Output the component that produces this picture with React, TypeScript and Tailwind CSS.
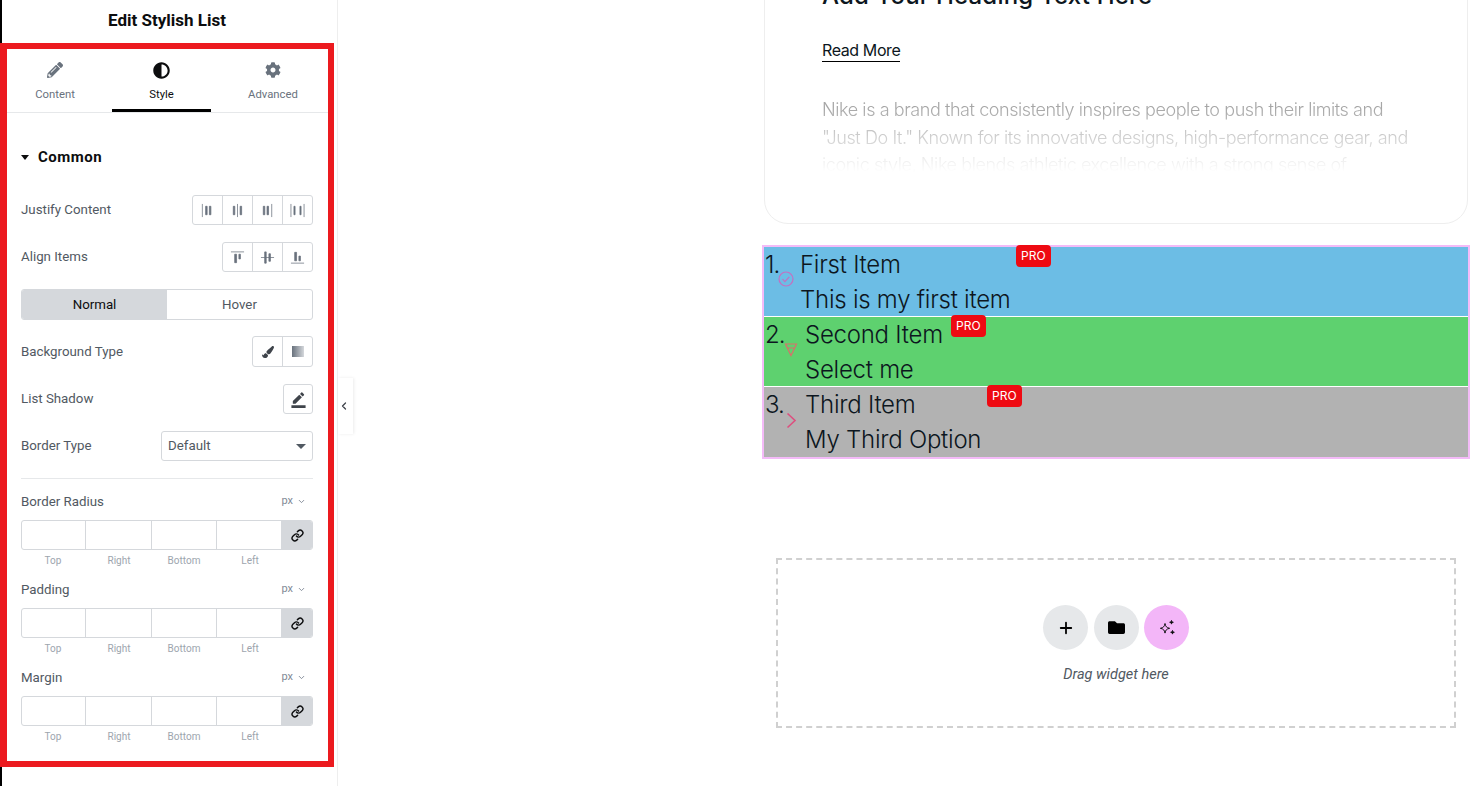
import { ChevronDown, ChevronLeft, Link, Plus } from "lucide-react";
import { FaAdjust, FaCog, FaFolder, FaPaintBrush, FaPencilAlt } from "react-icons/fa";
import { MdBorderColor } from "react-icons/md";

const justifyIcons = [
  <g key="a"><path d="M2.5 2v14" /><path d="M6 4.5h1.6v9H6zM10 4.5h1.6v9H10z" /></g>,
  <g key="b"><path d="M3.5 4.5h1.6v9H3.5z" /><path d="M8 2v14" /><path d="M10.8 4.5h1.6v9h-1.6z" /></g>,
  <g key="c"><path d="M3.5 4.5h1.6v9H3.5zM7.5 4.5h1.6v9H7.5z" /><path d="M12.5 2v14" /></g>,
  <g key="d"><path d="M1 2v14M15 2v14" /><path d="M4.2 4.5h1.2v9H4.2zM10.6 4.5h1.2v9h-1.2z" /></g>,
];

const alignIcons = [
  <g key="a"><path d="M1 3h14" /><path d="M5 5.5h2v9H5zM9.5 5.5h1.6v5H9.5z" /></g>,
  <g key="b"><path d="M1 9h14" /><path d="M5 3h1.6v12H5zM9.5 5h1.6v8H9.5z" /></g>,
  <g key="c"><path d="M1 15h14" /><path d="M5 3.5h2v9H5zM9.5 7.5h1.6v5H9.5z" /></g>,
];

function GlyphGroup({ icons, width }: { icons: React.ReactNode[]; width: string }) {
  return (
    <div className={`flex h-[30px] ${width} rounded-[3px] border border-[#d5d8dc] divide-x divide-[#d5d8dc]`}>
      {icons.map((icon, i) => (
        <div key={i} className="flex flex-1 items-center justify-center">
          <svg width="15" height="17" viewBox="0 0 16 18" fill="#69727d" stroke="#69727d" strokeWidth="0.8">
            {icon}
          </svg>
        </div>
      ))}
    </div>
  );
}

function Row({ label, children, className }: { label: string; children: React.ReactNode; className: string }) {
  return (
    <div className={`flex items-center justify-between ${className}`}>
      <span className="text-[13.3px] text-[#515962]">{label}</span>
      {children}
    </div>
  );
}

function Dimensions({ label, className }: { label: string; className: string }) {
  return (
    <div className={className}>
      <div className="flex h-[18px] items-center justify-between pt-[1px] pr-[7px]">
        <span className="text-[13.3px] text-[#515962]">{label}</span>
        <span className="flex items-center gap-1 text-[11px] text-[#818a96]">
          px <ChevronDown size={9} strokeWidth={2.5} />
        </span>
      </div>
      <div className="mt-[10px] flex h-[30px] overflow-hidden rounded-[3px] border border-[#d5d8dc]">
        <div className="w-[64px] border-r border-[#d5d8dc]" />
        <div className="w-[66px] border-r border-[#d5d8dc]" />
        <div className="w-[65px] border-r border-[#d5d8dc]" />
        <div className="flex-1" />
        <div className="flex w-[31px] items-center justify-center bg-[#d5d8dc] pl-px">
          <Link size={13} strokeWidth={2.6} className="text-[#0c0d0e]" />
        </div>
      </div>
      <div className="mt-[4px] flex text-center text-[10px] leading-[14px] text-[#9da5ae]">
        <span className="w-[64px]">Top</span>
        <span className="w-[68px]">Right</span>
        <span className="w-[62px]">Bottom</span>
        <span className="w-[70px]">Left</span>
      </div>
    </div>
  );
}

function Sidebar() {
  return (
    <aside className="h-[786px] w-[338px] shrink-0 border-r border-[#eeeeee] bg-white font-['Roboto',sans-serif]">
      <div className="h-[43px] border-l-2 border-black">
        <h1 className="w-[330px] pt-[9px] text-center text-[17px] leading-[22px] font-bold text-[#0c0d0e]">Edit Stylish List</h1>
      </div>
      <div className="h-[724px] w-[334px] border-[6px] border-l-[7px] border-[#ec1a1f]">
        <div className="flex h-[64px] border-b border-[#e6e8ea] text-[11.3px] text-[#69727d]">
          <div className="flex w-[105px] flex-col items-center pt-[13px] pr-[9px]">
            <FaPencilAlt size={16} />
            <span className="mt-[10px] leading-[14px]">Content</span>
          </div>
          <div className="flex h-[63px] w-[99px] flex-col items-center border-b-[3px] border-black pt-[13px] text-[#0c0d0e]">
            <FaAdjust size={17} />
            <span className="mt-[9px] leading-[14px]">Style</span>
          </div>
          <div className="flex flex-1 flex-col items-center pt-[13px] pl-[7px]">
            <FaCog size={16} />
            <span className="mt-[10px] leading-[14px]">Advanced</span>
          </div>
        </div>

        <div className="pr-[15px] pl-[14px]">
          <div className="mt-[35px] flex h-[18px] items-center gap-[9px] text-[15px] font-bold tracking-[0.5px] text-[#0c0d0e]">
            <span className="h-0 w-0 border-x-[4.5px] border-t-[5px] border-x-transparent border-t-[#0c0d0e]" />
            Common
          </div>

          <Row label="Justify Content" className="mt-[29px]">
            <GlyphGroup icons={justifyIcons} width="w-[121px]" />
          </Row>
          <Row label="Align Items" className="mt-[17px]">
            <GlyphGroup icons={alignIcons} width="w-[91px]" />
          </Row>

          <div className="mt-[17px] flex h-[31px] overflow-hidden rounded-[3px] border border-[#d5d8dc] text-[13.3px]">
            <div className="flex w-[145px] items-center justify-center bg-[#d5d8dc] text-[#0c0d0e]">Normal</div>
            <div className="flex flex-1 items-center justify-center text-[#515962]">Hover</div>
          </div>

          <Row label="Background Type" className="mt-[16px]">
            <div className="flex h-[31px] divide-x divide-[#d5d8dc] rounded-[3px] border border-[#d5d8dc]">
              <div className="flex w-[30px] items-center justify-center">
                <FaPaintBrush size={12} className="text-[#3f444b]" />
              </div>
              <div className="flex w-[29px] items-center justify-center">
                <div className="h-[11px] w-[12px] bg-gradient-to-r from-[#69727d] to-[#d5d8dc]" />
              </div>
            </div>
          </Row>

          <Row label="List Shadow" className="mt-[17px]">
            <div className="flex h-[30px] w-[30px] items-center justify-center rounded-[3px] border border-[#d5d8dc]">
              <MdBorderColor size={17} className="text-[#3f444b]" />
            </div>
          </Row>

          <Row label="Border Type" className="mt-[17px]">
            <div className="flex h-[30px] w-[152px] items-center justify-between rounded-[3px] border border-[#d5d8dc] pr-[6px] pl-[6px] text-[13.3px] text-[#515962]">
              Default
              <span className="h-0 w-0 border-x-[5px] border-t-[5px] border-x-transparent border-t-[#515962]" />
            </div>
          </Row>

          <div className="mt-[17px] h-px bg-[#e6e8ea]" />

          <Dimensions label="Border Radius" className="mt-[13px]" />
          <Dimensions label="Padding" className="mt-[12px]" />
          <Dimensions label="Margin" className="mt-[12px]" />
        </div>
      </div>
      <div className="h-[19px] border-l-2 border-black" />
    </aside>
  );
}

const items = [
  { n: "1.", title: "First Item", sub: "This is my first item", row: "h-[69px] bg-[#6cbde5]", num: "w-[14px]", badge: "left-[252px]", icon: "check" },
  { n: "2.", title: "Second Item", sub: "Select me", row: "h-[70px] border-t border-white bg-[#5ed16f]", num: "w-[19px]", badge: "left-[187px]", icon: "funnel" },
  { n: "3.", title: "Third Item", sub: "My Third Option", row: "h-[71px] border-t border-white bg-[#b2b2b2]", num: "w-[19px]", badge: "left-[223px]", icon: "chevron" },
];

function ItemIcon({ kind }: { kind: string }) {
  if (kind === "check") {
    return (
      <svg width="16" height="16" viewBox="0 0 16 16" fill="none" stroke="#c56fc0" strokeWidth="1.2">
        <circle cx="8" cy="8" r="7" />
        <path d="M4.5 8.2l2.4 2.4 4.4-4.8" />
      </svg>
    );
  }
  if (kind === "funnel") {
    return (
      <svg width="16" height="16" viewBox="0 0 16 16" fill="none" stroke="#d9706b" strokeWidth="1.2">
        <path d="M2.5 3h11L8 14.5zM4.5 7h7" />
      </svg>
    );
  }
  return (
    <svg width="16" height="18" viewBox="0 0 16 18" fill="none" stroke="#dd4f7f" strokeWidth="1.6">
      <path d="M4.5 2.5L12 9.5l-7.5 7" />
    </svg>
  );
}

function StylishList() {
  return (
    <div className="mt-[21px] w-[708px] border-2 border-[#f4bbf8] text-[24px] leading-[35px] font-light tracking-[-0.25px] text-[#0c1620]">
      {items.map((item) => (
        <div key={item.n} className={`relative flex ${item.row}`}>
          <span className={`${item.num} shrink-0 pl-px tracking-[-1px]`}>{item.n}</span>
          <span className="mt-[24px] w-[16px] shrink-0">
            <ItemIcon kind={item.icon} />
          </span>
          <div className="ml-[6px]">
            <div>{item.title}</div>
            <div>{item.sub}</div>
          </div>
          <span
            className={`absolute ${item.badge} top-[-2px] rounded-[4px] bg-[#ee0a12] px-[5px] text-[12px] leading-[22px] font-normal tracking-normal text-white`}
          >
            PRO
          </span>
        </div>
      ))}
    </div>
  );
}

function DropZone() {
  return (
    <div className="mt-[99px] ml-[14px] flex h-[170px] w-[680px] flex-col items-center border-2 border-dashed border-[#d0d0d0] pt-[45px]">
      <div className="flex">
        <div className="flex h-[45px] w-[45px] items-center justify-center rounded-full bg-[#e6e8ea] text-black">
          <Plus size={18} strokeWidth={2.4} />
        </div>
        <div className="ml-[6px] flex h-[45px] w-[45px] items-center justify-center rounded-full bg-[#e6e8ea] text-black">
          <FaFolder size={17} />
        </div>
        <div className="ml-[5px] flex h-[45px] w-[45px] items-center justify-center rounded-full bg-[#f3b6f8] text-black">
          <svg width="18" height="18" viewBox="0 0 18 18" fill="none" stroke="#0c0d0e" strokeWidth="1">
            <path d="M7 4.5c.5 3 1.6 4.2 4.6 4.8-3 .6-4.1 1.8-4.6 4.8-.5-3-1.6-4.2-4.6-4.8 3-.6 4.1-1.8 4.6-4.8z" />
            <path fill="#0c0d0e" d="M13.5 1.5c.2 1.1.7 1.6 1.8 1.8-1.1.2-1.6.7-1.8 1.8-.2-1.1-.7-1.6-1.8-1.8 1.1-.2 1.6-.7 1.8-1.8zM14.5 11.5c.2 1.1.7 1.6 1.8 1.8-1.1.2-1.6.7-1.8 1.8-.2-1.1-.7-1.6-1.8-1.8 1.1-.2 1.6-.7 1.8-1.8z" />
          </svg>
        </div>
      </div>
      <p className="mt-[16px] font-['Roboto',sans-serif] text-[14.5px] leading-[18px] text-[#515962] italic">Drag widget here</p>
    </div>
  );
}

export default function App() {
  return (
    <div className="relative flex h-[786px] w-[1482px] overflow-hidden bg-white">
      <Sidebar />

      <div className="absolute top-[378px] left-[338px] flex h-[56px] w-[15px] items-center justify-center bg-white pr-[3px] shadow-[1px_0_3px_rgba(0,0,0,0.08)]">
        <ChevronLeft size={12} strokeWidth={2.5} className="text-[#3f444b]" />
      </div>

      <main className="ml-[424px] w-[708px] font-['Inter',sans-serif]">
        <section className="-mt-[57px] ml-[2px] h-[281px] w-[704px] rounded-[24px] border border-[#eeeeee] pl-[57px]">
          <h2 className="mt-[34px] text-[24px] leading-[36px] font-medium tracking-[0.2px] text-[#0c1620]">Add Your Heading Text Here</h2>
          <a className="mt-[25px] inline-block border-b border-black text-[16px] leading-[22px] font-normal tracking-[-0.4px] text-[#0c1620]">Read More</a>
          <p className="mt-[34px] h-[76px] w-[600px] overflow-hidden text-[18px] leading-[27.5px] font-light tracking-[-0.42px] text-[#a6a6a6] [mask-image:linear-gradient(to_bottom,black_15%,transparent_100%)]">
            Nike is a brand that consistently inspires people to push their limits and "Just Do It." Known for its innovative designs, high-performance gear, and iconic style, Nike blends athletic excellence with a strong sense of
          </p>
        </section>
        <StylishList />
        <DropZone />
      </main>
    </div>
  );
}
